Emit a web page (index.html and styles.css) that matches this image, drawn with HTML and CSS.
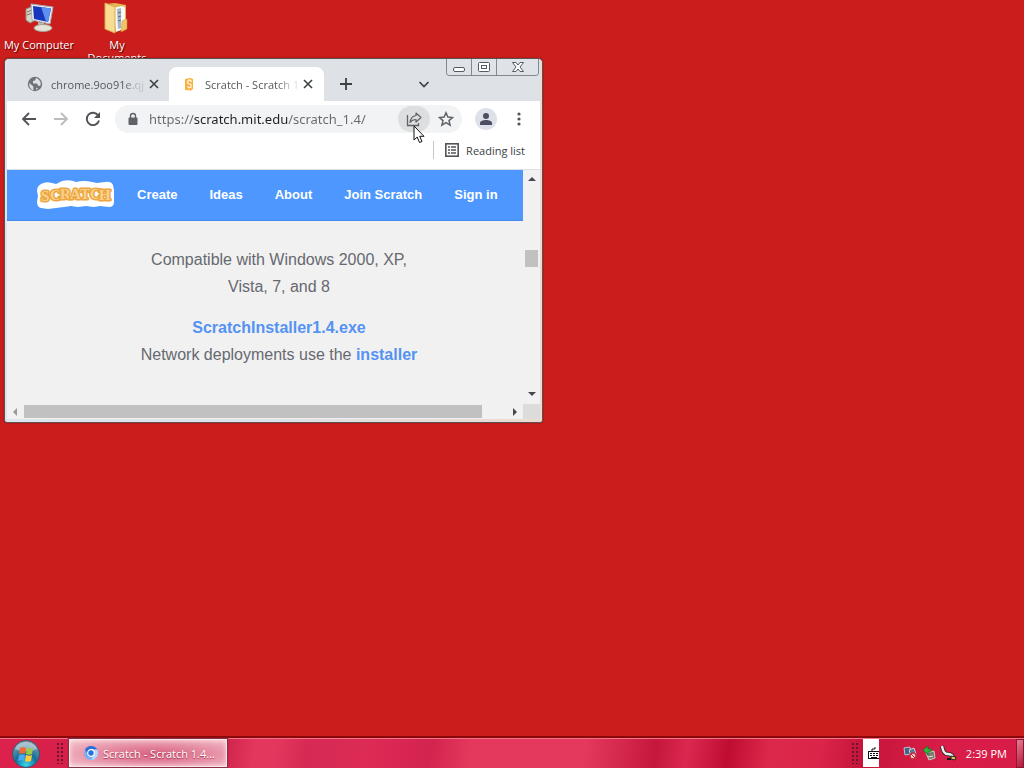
FILE: index.html
```html
<!DOCTYPE html>
<html lang="en">
<head>
<meta charset="utf-8">
<title>Desktop</title>
<link rel="stylesheet" href="styles.css">
</head>
<body>
<main class="desktop">
  <div class="shortcuts">
    <a class="shortcut" href="#computer">
      <svg width="32" height="32" viewBox="0 0 32 32" aria-hidden="true">
        <path d="M3 7l5-2 3 2v12l-4 2-4-3z" fill="#d8d4c4" stroke="#8f8b80"/>
        <path d="M4 10l5-2M4 13l5-2" stroke="#77756d"/>
        <path d="M8 2l22 3-3 17-18-4z" fill="#e9edf0" stroke="#a5adb5"/>
        <path d="M10 4l18 2.500-3 13.500-14-3z" fill="#1735bd"/>
        <path d="M18 5l10 1.500-3 13.500-2-.5z" fill="#5e8ef0"/>
        <path d="M15 20l6 1v4h-6z" fill="#b9b9b3"/>
        <ellipse cx="20" cy="26" rx="9" ry="3.500" fill="#e5e2d7" stroke="#a49e90"/>
      </svg>
      <span>My Computer</span>
    </a>
    <a class="shortcut" href="#documents">
      <svg width="32" height="32" viewBox="0 0 32 32" aria-hidden="true">
        <path d="M5 2l9-1 11 2v24l-12 3z" fill="#e3b653"/>
        <path d="M12 6l9-2 3 1v21l-9 4z" fill="#f6f8fa"/>
        <path d="M16 7l4-1v20l-3 1z" fill="#a9b6c4"/>
        <path d="M17 11l3-1M17 15l3-1M17 19l3-1" stroke="#5c6f82"/>
        <path d="M4 1l10 4v26l-10-4z" fill="#f9dc94" stroke="#d9a94c"/>
        <path d="M21 19l5-2v10l-6 3z" fill="#f0c469" stroke="#c89333" stroke-width=".5"/>
      </svg>
      <span>My Documents</span>
    </a>
  </div>

  <section class="window" aria-label="Scratch">
    <div class="captions">
      <button class="cap" aria-label="Minimize"><svg width="14" height="12" viewBox="0 0 14 12"><rect x="1.500" y="6.500" width="11" height="4" rx="1.500" fill="#fff" stroke="#535c66"/></svg></button>
      <button class="cap" aria-label="Maximize"><svg width="14" height="12" viewBox="0 0 14 12"><rect x="1.500" y="1.500" width="11" height="9" rx="1" fill="#fff" stroke="#535c66"/><rect x="4.500" y="4.500" width="5" height="3" fill="#fff" stroke="#535c66"/></svg></button>
      <button class="cap cap-close" aria-label="Close"><svg width="14" height="12" viewBox="0 0 14 12"><path d="M1.500 1.500h3.500l2 2.500 2-2.500h3.500l-3.500 4.500 3.500 4.500H9L7 8l-2 2.500H1.500L5 6z" fill="#fff" stroke="#535c66"/></svg></button>
    </div>
    <div class="frame">
      <div class="tabs">
        <div class="tab">
          <svg width="16" height="16" viewBox="0 0 16 16" aria-hidden="true"><circle cx="8" cy="8" r="7.200" fill="#70757a"/><path d="M2.300 7l4 3.500v3.800C3.800 13.600 1.800 10.500 2.300 7zM9 2l-1 2.500-2 .5v2.500h4l1 2 2 .5c1.500-2 1-6-4-8zM9.500 11.500l1.500 1-2 1.500z" fill="#dee1e6"/></svg>
          <span class="tab-title">chrome.9oo91e.qj</span>
          <button class="plain" aria-label="Close tab"><svg width="12" height="12" viewBox="0 0 12 12"><path d="M2 2l8 8m0-8l-8 8" stroke="#3c4043" stroke-width="1.600"/></svg></button>
        </div>
        <div class="tab tab-active">
          <svg width="16" height="16" viewBox="0 0 16 16" aria-hidden="true"><path d="M4 3l5-1 3 1v10l-2 1.500-6-.5V3z" fill="#fbb040"/><path d="M10 6V4.500L8 4 6.500 5.500 7 7.500l3 1v2.500L8 12 6.500 10.500" fill="none" stroke="#fff3d8" stroke-width="1.300"/></svg>
          <span class="tab-title">Scratch - Scratch 1</span>
          <button class="plain" aria-label="Close tab"><svg width="12" height="12" viewBox="0 0 12 12"><path d="M2 2l8 8m0-8l-8 8" stroke="#3c4043" stroke-width="1.600"/></svg></button>
        </div>
        <button class="plain new-tab" aria-label="New tab"><svg width="14" height="14" viewBox="0 0 14 14"><path d="M7 1v12M1 7h12" stroke="#3c4043" stroke-width="1.800"/></svg></button>
        <button class="plain tab-search" aria-label="Search tabs"><svg width="12" height="12" viewBox="0 0 12 12"><path d="M1.500 4L6 8.500 10.500 4" fill="none" stroke="#3c4043" stroke-width="1.700"/></svg></button>
      </div>

      <div class="toolbar">
        <button class="plain" aria-label="Back"><svg width="16" height="16" viewBox="0 0 16 16"><path d="M15 8H2M8 2L2 8l6 6" fill="none" stroke="#505357" stroke-width="1.800"/></svg></button>
        <button class="plain" aria-label="Forward"><svg width="16" height="16" viewBox="0 0 16 16"><path d="M1 8h13M8 2l6 6-6 6" fill="none" stroke="#babcbe" stroke-width="1.800"/></svg></button>
        <button class="plain" aria-label="Reload"><svg width="16" height="16" viewBox="0 0 16 16"><path d="M13.200 4.500A6.200 6.200 0 1 0 14 9.500" fill="none" stroke="#505357" stroke-width="1.900"/><path d="M15 1v6H9z" fill="#505357"/></svg></button>
        <div class="omnibox">
          <svg width="12" height="14" viewBox="0 0 12 14" aria-hidden="true"><path d="M3.500 6V4a2.500 2.500 0 0 1 5 0v2" fill="none" stroke="#5f6368" stroke-width="1.400"/><rect x="1.500" y="5.500" width="9" height="7.500" rx="1" fill="#5f6368"/></svg>
          <input class="url" aria-label="Address" value="https://scratch.mit.edu/scratch_1.4/">
          <button class="plain share" aria-label="Share this page"><svg width="16" height="16" viewBox="0 0 16 16"><path d="M1.500 4v10.500h11V12" fill="none" stroke="#5f6368" stroke-width="1.300"/><path d="M10 2l5 4.500L10 11V8.500c-3 0-4.500 1-6 3 .5-4 2.500-6.500 6-7z" fill="none" stroke="#5f6368" stroke-width="1.200" stroke-linejoin="round"/></svg></button>
          <button class="plain star" aria-label="Bookmark this tab"><svg width="16" height="16" viewBox="0 0 16 16"><path d="M8 1.800l1.900 4.300 4.600.4-3.500 3.100 1.100 4.600L8 11.700l-4.100 2.500L5 9.600 1.500 6.500l4.600-.4z" fill="none" stroke="#5f6368" stroke-width="1.500"/></svg></button>
        </div>
        <button class="plain avatar" aria-label="Profile"><svg width="14" height="14" viewBox="0 0 14 14"><circle cx="7" cy="4" r="3" fill="#4b5060"/><path d="M1 13v-2c0-2 3-3 6-3s6 1 6 3v2z" fill="#4b5060"/></svg></button>
        <button class="plain menu" aria-label="Menu"><svg width="4" height="16" viewBox="0 0 4 16"><g fill="#505357"><circle cx="2" cy="3" r="1.600"/><circle cx="2" cy="8" r="1.600"/><circle cx="2" cy="13" r="1.600"/></g></svg></button>
      </div>

      <div class="bookmarks">
        <button class="plain reading">
          <svg width="16" height="16" viewBox="0 0 16 16" aria-hidden="true"><rect x="1.800" y="1.800" width="12.400" height="12.400" fill="none" stroke="#505357" stroke-width="1.600"/><path d="M4 5h2m1 0h5M4 8h2m1 0h5M4 11h2m1 0h5" stroke="#505357" stroke-width="1.500"/></svg>
          <span>Reading list</span>
        </button>
      </div>

      <div class="viewport">
        <div class="page">
          <nav class="nav">
            <a class="logo" href="#home" aria-label="Scratch home">
              <svg width="78" height="30" viewBox="0 0 78 30">
                <path d="M4 5Q9 2 15 4l4 1 6-3q8-2 14 1 8-2 16 0l5 1 8-1q6-1 8 3l1 5v12q0 5-5 5l-9-1-6 1-8-1-8 1-7-1-7 1-8 1-8 1-7-1q-4-1-4-6l1-6-1-5q0-5 4-7z" fill="#fff"/>
                <text class="logo-text" y="22 21 20 20 20 20 21" x="4 13 23 33 43 53 62">SCRATCH</text>
              </svg>
            </a>
            <a href="#create">Create</a>
            <a href="#ideas">Ideas</a>
            <a href="#about">About</a>
            <a href="#join">Join Scratch</a>
            <a href="#signin">Sign in</a>
          </nav>
          <article class="download">
            <p>Compatible with Windows 2000, XP, Vista, 7, and 8</p>
            <p><a href="#exe">ScratchInstaller1.4.exe</a><br>Network deployments use the <a href="#installer">installer</a></p>
          </article>
        </div>
        <div class="vscroll">
          <svg width="8" height="4" viewBox="0 0 8 4"><path d="M0 4l4-4 4 4z" fill="#45484b"/></svg>
          <div class="vthumb"></div>
          <svg width="8" height="4" viewBox="0 0 8 4"><path d="M0 0l4 4 4-4z" fill="#45484b"/></svg>
        </div>
        <div class="hscroll">
          <svg width="4" height="8" viewBox="0 0 4 8"><path d="M4 0L0 4l4 4z" fill="#999"/></svg>
          <div class="htrack"><div class="hthumb"></div></div>
          <svg width="4" height="8" viewBox="0 0 4 8"><path d="M0 0l4 4-4 4z" fill="#45484b"/></svg>
        </div>
        <div class="corner"></div>
      </div>
    </div>
  </section>

  <svg class="pointer" width="13" height="20" viewBox="0 0 13 20" aria-hidden="true"><path d="M1 1v14l3.200-3 2.300 5.500 2.500-1-2.300-5.200H11z" fill="#fff" stroke="#111"/></svg>
</main>

<footer class="taskbar">
  <button class="plain start" aria-label="Start">
    <svg width="30" height="30" viewBox="0 0 30 30">
      <defs><radialGradient id="orb" cx=".5" cy=".9" r=".9"><stop offset="0" stop-color="#3bd7ef"/><stop offset=".45" stop-color="#176e9c"/><stop offset="1" stop-color="#93a9b5"/></radialGradient></defs>
      <circle cx="15" cy="16" r="13.500" fill="url(#orb)" stroke="#315568"/>
      <path d="M4 11C7 2 23 2 26 11c-7 3-15 3-22 0z" fill="#fff" opacity=".4"/>
      <path d="M9 10c2-1 4-1 6 0l-1 6c-2-1-4-1-6 0z" fill="#f26a30"/><path d="M16 10c2 1 4 1 6 0l-1 6c-2 1-4 1-6 0z" fill="#9ccc3b"/><path d="M8 17c2-1 4-1 6 0l-1 6c-2-1-4-1-6 0z" fill="#4aa9ee"/><path d="M15 17c2 1 4 1 6 0l-1 6c-2 1-4 1-6 0z" fill="#fccb36"/>
    </svg>
  </button>
  <div class="grip"></div>
  <button class="task">
    <svg width="16" height="16" viewBox="0 0 16 16" aria-hidden="true"><circle cx="8" cy="8" r="7" fill="#75aef5"/><path d="M8 1a7 7 0 0 0-6 3.500L5 10l3-6h6A7 7 0 0 0 8 1z" fill="#2f6fd4"/><path d="M14.500 5A7 7 0 0 1 8 15l3-5V5z" fill="#b4d4fb"/><circle cx="8" cy="8" r="3.300" fill="#286fe0" stroke="#fff" stroke-width="1.200"/></svg>
    <span>Scratch - Scratch 1.4...</span>
  </button>
  <div class="grip grip-end"></div>
  <div class="keyboard"><svg width="14" height="14" viewBox="0 0 14 14" aria-hidden="true"><path d="M5 5V3h3V1" fill="none" stroke="#111"/><rect x="1.500" y="5.500" width="12" height="7" fill="#fff" stroke="#111"/><path d="M3 7.500h10M3 9.500h10" stroke="#111" stroke-dasharray="2 1"/><path d="M4 11.500h6" stroke="#111"/></svg></div>
  <div class="tray">
    <svg width="16" height="16" viewBox="0 0 16 16" aria-hidden="true"><path d="M2 3l6-1 1 7-6 1z" fill="#456184" stroke="#bac5d1"/><path d="M7 5l5-2 2 6-5 2z" fill="#5c7894" stroke="#c9cdd2"/><circle cx="11" cy="11" r="3" fill="#f3d0d2" stroke="#c82f3b" stroke-width="1.300"/><path d="M9 9l4 4" stroke="#b81c2c"/></svg>
    <svg width="16" height="16" viewBox="0 0 16 16" aria-hidden="true"><path d="M5 8l8-2 1 7-6 2z" fill="#767a70" stroke="#c8cdbd"/><path d="M2 5l5-4v3h4L9 7H7v3z" fill="#2cb63c" stroke="#176c25" stroke-width=".7"/><path d="M7 12l5-1" stroke="#e7edd8"/></svg>
    <svg width="18" height="16" viewBox="0 0 18 16" aria-hidden="true"><path d="M2 1c1 5 2 8 6 8 3 0 4 1 5 3" fill="none" stroke="#222" stroke-width="4"/><path d="M2 1c1 5 2 8 6 8 3 0 4 1 5 3" fill="none" stroke="#eee" stroke-width="2.400"/><path d="M7 14h4" stroke="#111" stroke-width="2"/><path d="M11 11l5 1-1 3-4-1z" fill="#e8c84d" stroke="#222"/></svg>
  </div>
  <time class="clock">2:39 PM</time>
  <button class="plain show-desktop" aria-label="Show desktop"></button>
</footer>
</body>
</html>
```

FILE: styles.css
```css
* { box-sizing: border-box; }

body {
  margin: 0;
  height: 100vh;
  display: flex;
  flex-direction: column;
  overflow: hidden;
  background: #cb1e1c;
  font-family: "Open Sans", "Noto Sans", sans-serif;
  font-size: 11px;
}

svg { display: block; flex: none; }

button { font: inherit; cursor: pointer; }

.plain {
  display: flex;
  align-items: center;
  justify-content: center;
  padding: 0;
  border: 0;
  background: none;
}

.desktop { position: relative; flex: 1; min-height: 0; }

.shortcuts { display: flex; padding-top: 2px; }

.shortcut {
  display: flex;
  flex-direction: column;
  align-items: center;
  gap: 4px;
  width: 78px;
  color: #fff;
  line-height: 13px;
  text-align: center;
  text-decoration: none;
  text-shadow: 1px 1px 1px #500;
}
.shortcut span { max-width: 76px; white-space: nowrap; }
.shortcut:last-child span { white-space: normal; }

/* Browser window, free on the desktop */
.window {
  position: absolute;
  left: 4px;
  top: 58px;
  width: 539px;
  border: 1px solid #5d5152;
  border-radius: 5px 5px 3px 3px;
  background: #e9e2dd;
  box-shadow: 0 0 2px #6009;
}
.frame { padding: 0 2px 3px; border-radius: 4px; background: linear-gradient(90deg, #dfe5ee, #dee1e6 50%, #eadbd0); }

.captions {
  position: absolute;
  top: 0;
  right: 3px;
  display: flex;
  border: 1px solid #81888f;
  border-top: 0;
  border-radius: 0 0 4px 4px;
  overflow: hidden;
}
.cap {
  display: flex;
  align-items: center;
  justify-content: center;
  width: 25px;
  height: 16px;
  padding: 0;
  border: 0;
  border-right: 1px solid #81888f;
  background: #dfe2e7;
}
.cap-close { width: 41px; border-right: 0; }

.tabs { display: flex; align-items: flex-end; height: 42px; background: #dee1e6; border-radius: 4px 4px 0 0; }
.tab {
  display: flex;
  align-items: center;
  width: 162px;
  height: 34px;
  padding: 0 9px 0 20px;
  color: #54575b;
}
.tab-active { width: 155px; padding: 0 10px 0 12px; border-radius: 8px 8px 0 0; background: #fff; }
.tab-title {
  flex: 1;
  margin-left: 8px;
  white-space: nowrap;
  -webkit-mask-image: linear-gradient(90deg, #000 75%, #0003 90%);
  mask-image: linear-gradient(90deg, #000 75%, #0003 90%);
}
.new-tab { width: 44px; height: 34px; }
.tab-search { width: 28px; height: 34px; margin-left: 42px; }

.toolbar { display: flex; align-items: center; height: 36px; padding: 0 15px 0 14px; gap: 16px; background: #fff; }
.omnibox {
  display: flex;
  flex: 1;
  align-items: center;
  height: 28px;
  margin-left: -2px;
  padding-left: 12px;
  border-radius: 14px;
  background: #f1f3f4;
}
.url {
  flex: 1;
  min-width: 0;
  margin-left: 10px;
  padding: 0;
  border: 0;
  outline: 0;
  font: 13px "Noto Sans", "Open Sans", sans-serif;
  color: transparent;
  background: linear-gradient(90deg, #65696e 45px, #202124 45px 139px, #65696e 139px);
  -webkit-background-clip: text;
  background-clip: text;
}
.share { width: 32px; height: 26px; border-radius: 13px; background: #dcdee0; }
.star { width: 32px; }
.avatar { width: 22px; height: 22px; border-radius: 11px; background: #dee1e9; margin-left: -3px; }
.menu { width: 12px; }

.bookmarks { display: flex; justify-content: flex-end; height: 33px; padding: 4px 15px 10px 0; border-bottom: 1px solid #dcdfe3; background: #fff; }
.reading { gap: 6px; padding-left: 10px; border-left: 1px solid #c4c7ca; color: #3c4043; }

.viewport {
  display: grid;
  grid-template-columns: 1fr 17px;
  grid-template-rows: auto 15px;
  background: #f1f1f1;
}
.page { font-family: "Liberation Sans", Arial, sans-serif; color: #666970; }
.nav {
  display: flex;
  align-items: center;
  gap: 32px;
  height: 51px;
  padding: 0 20px 2px 30px;
  background: #4d97ff;
  border-bottom: 1px solid #4589ea;
  font-size: 13px;
  font-weight: 700;
}
.nav a { color: #fff; text-decoration: none; white-space: nowrap; }
.nav .logo { margin-right: -10px; }
.logo-text {
  font: 700 15px "Liberation Serif", serif;
  fill: #fbd08c;
  stroke: #eda63d;
  stroke-width: 3px;
  stroke-linejoin: round;
  paint-order: stroke;
}

.download { width: 280px; margin: 0 auto 0 132px; padding: 25px 0 36px; font-size: 16px; line-height: 27px; text-align: center; }
.download p { margin: 0 0 14px; }
.download p:last-child { margin: 0; white-space: nowrap; }
.download a { color: #5493f2; font-weight: 700; text-decoration: none; }

.vscroll { display: flex; flex-direction: column; align-items: center; padding: 7px 0 8px; }
.vthumb { width: 13px; height: 17px; margin: 69px 0 auto; background: #c1c1c1; }
.hscroll { display: flex; align-items: center; gap: 7px; padding: 0 6px; }
.htrack { flex: 1; }
.hthumb { width: 95%; height: 13px; background: #c1c1c1; }
.corner { background: #dcdcdc; }

.pointer { position: absolute; left: 413px; top: 125px; }

/* Taskbar */
.taskbar {
  display: flex;
  align-items: center;
  height: 32px;
  border-top: 2px solid #8c0709;
  box-shadow: inset 0 1px #f1748a;
  background: linear-gradient(100deg, #dc214c 0, #c91d45 21%, #e4375e 25%, #e4375e 27%, #d62a54 30%, #dc2b55 36%, #d3234f 42%, #e4395c 46%, #e4395c 57%, #c6173b 64%, #da2950 67%, #bf0d31 71%, #dc294b 75%, #da2448 80%, #c5153a 84%, #d91d48 92%, #d71c47 100%);
  color: #fff;
}
.start { width: 52px; }
.grip {
  width: 8px;
  height: 22px;
  margin: 0 5px 0 4px;
  background: radial-gradient(circle, #6c1533 1px, transparent 1px) 0 0 / 4px 4px;
}
.task {
  display: flex;
  align-items: center;
  gap: 4px;
  width: 158px;
  height: 28px;
  padding: 0 0 0 13px;
  border: 1px solid #fbe5e8;
  box-shadow: 0 0 1px 1px #8a3045, inset 0 0 5px #fff9;
  background: radial-gradient(ellipse at 55% 55%, #d5607d, #e58ca2 45%, #f7c8d0);
  color: #fff;
  text-shadow: 0 1px 1px #a03550;
  white-space: nowrap;
}
.grip-end { margin: 0 4px 0 auto; }
.keyboard { display: flex; align-items: center; width: 16px; height: 28px; padding-left: 4px; overflow: hidden; background: #fff; }
.tray { display: flex; align-items: center; gap: 3px; margin-left: 23px; }
.clock { margin: 0 9px 0 8px; }
.show-desktop { width: 8px; height: 29px; border: 1px solid #8b1733; background: linear-gradient(135deg, #e77d93, #b5163b); }
```
